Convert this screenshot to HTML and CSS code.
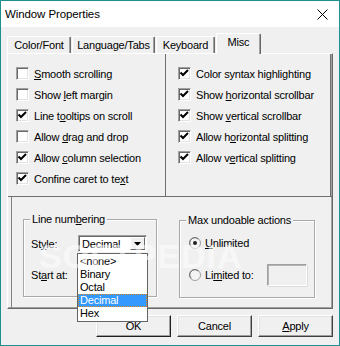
FILE: index.html
```html
<!DOCTYPE html>
<html>
<head>
<meta charset="utf-8">
<link rel="stylesheet" href="styles.css">
</head>
<body>
<div class="window">
  <div class="titlebar">
    <span class="title">Window Properties</span>
    <svg class="close" width="11" height="11" viewBox="0 0 11 11"><path d="M0.5 0.5 L10.5 10.5 M10.5 0.5 L0.5 10.5" stroke="#000" stroke-width="1" fill="none"/></svg>
  </div>
  <div class="content">
    <div class="tabs">
      <div class="tab tab-color">Color/Font</div>
      <div class="tab tab-lang">Language/Tabs</div>
      <div class="tab tab-key">Keyboard</div>
      <div class="tab tab-misc active">Misc</div>
    </div>
    <div class="panel">
      <div class="top">
        <div class="col col-left">
          <div class="check-row"><span class="cb"></span><span><u>S</u>mooth scrolling</span></div>
          <div class="check-row"><span class="cb"></span><span>Show <u>l</u>eft margin</span></div>
          <div class="check-row"><span class="cb checked"><svg width="11" height="11" viewBox="0 0 11 11"><path d="M1.5 4.5 L4 7 L9 2" stroke="#000" stroke-width="2" fill="none"/></svg></span><span>Line t<u>o</u>oltips on scroll</span></div>
          <div class="check-row"><span class="cb"></span><span>Allow <u>d</u>rag and drop</span></div>
          <div class="check-row"><span class="cb checked"><svg width="11" height="11" viewBox="0 0 11 11"><path d="M1.5 4.5 L4 7 L9 2" stroke="#000" stroke-width="2" fill="none"/></svg></span><span>Allow <u>c</u>olumn selection</span></div>
          <div class="check-row"><span class="cb checked"><svg width="11" height="11" viewBox="0 0 11 11"><path d="M1.5 4.5 L4 7 L9 2" stroke="#000" stroke-width="2" fill="none"/></svg></span><span>Confine caret to te<u>x</u>t</span></div>
        </div>
        <div class="col col-right">
          <div class="check-row"><span class="cb checked"><svg width="11" height="11" viewBox="0 0 11 11"><path d="M1.5 4.5 L4 7 L9 2" stroke="#000" stroke-width="2" fill="none"/></svg></span><span>Color syntax highlighting</span></div>
          <div class="check-row"><span class="cb checked"><svg width="11" height="11" viewBox="0 0 11 11"><path d="M1.5 4.5 L4 7 L9 2" stroke="#000" stroke-width="2" fill="none"/></svg></span><span>Show <u>h</u>orizontal scrollbar</span></div>
          <div class="check-row"><span class="cb checked"><svg width="11" height="11" viewBox="0 0 11 11"><path d="M1.5 4.5 L4 7 L9 2" stroke="#000" stroke-width="2" fill="none"/></svg></span><span>Show <u>v</u>ertical scrollbar</span></div>
          <div class="check-row"><span class="cb checked"><svg width="11" height="11" viewBox="0 0 11 11"><path d="M1.5 4.5 L4 7 L9 2" stroke="#000" stroke-width="2" fill="none"/></svg></span><span>Allow h<u>o</u>rizontal splitting</span></div>
          <div class="check-row"><span class="cb checked"><svg width="11" height="11" viewBox="0 0 11 11"><path d="M1.5 4.5 L4 7 L9 2" stroke="#000" stroke-width="2" fill="none"/></svg></span><span>Allow v<u>e</u>rtical splitting</span></div>
        </div>
      </div>
      <div class="bottom">
        <div class="group group-line">
          <span class="legend">Line num<u>b</u>ering</span>
          <div class="field-row">
            <span class="label">St<u>y</u>le:</span>
            <div class="combo">
              <span class="combo-text">Decimal</span>
              <span class="combo-btn"><svg width="7" height="4" viewBox="0 0 7 4"><path d="M0 0 H7 L3.5 4 Z" fill="#000"/></svg></span>
              <div class="dropdown">
                <div class="item">&lt;none&gt;</div>
                <div class="item">Binary</div>
                <div class="item">Octal</div>
                <div class="item selected">Decimal</div>
                <div class="item">Hex</div>
              </div>
            </div>
          </div>
          <div class="field-row row-start">
            <span class="label">St<u>a</u>rt at:</span>
          </div>
        </div>
        <div class="group group-undo">
          <span class="legend">Max undoable actions</span>
          <div class="radio-row">
            <svg class="radio" width="12" height="12" viewBox="0 0 12 12"><circle cx="6" cy="6" r="5.5" fill="#f4f4f4" stroke="#a0a0a0"/><path d="M2.2 9.3 A4.5 4.5 0 0 1 9.3 2.2" stroke="#696969" fill="none"/><circle cx="6" cy="6" r="2" fill="#222"/></svg>
            <span><u>U</u>nlimited</span>
          </div>
          <div class="radio-row row-limited">
            <svg class="radio" width="12" height="12" viewBox="0 0 12 12"><circle cx="6" cy="6" r="5.5" fill="#f4f4f4" stroke="#a0a0a0"/><path d="M2.2 9.3 A4.5 4.5 0 0 1 9.3 2.2" stroke="#696969" fill="none"/></svg>
            <span class="limited-label">Li<u>m</u>ited to:</span>
            <span class="num-input"></span>
          </div>
        </div>
      </div>
    </div>
    <div class="buttons">
      <div class="btn btn-default">OK</div>
      <div class="btn">Cancel</div>
      <div class="btn"><u>A</u>pply</div>
    </div>
  </div>
  <div class="watermark">SOFTPEDIA</div>
</div>
</body>
</html>
```
FILE: styles.css
```css
* { box-sizing: border-box; }
html, body { margin: 0; padding: 0; }
body {
  font-family: "Liberation Sans", Arial, sans-serif;
  font-size: 11px;
  letter-spacing: -0.2px;
  color: #000;
  background: #f0f0f0;
}
u { text-decoration: underline; text-underline-offset: 1px; }

.window {
  position: relative;
  width: 340px;
  height: 346px;
  border: 1px solid #1e8f90;
  background: #f0f0f0;
  overflow: hidden;
}

.titlebar {
  height: 26px;
  background: #fff;
  display: flex;
  align-items: center;
  justify-content: space-between;
  padding: 0 11px 0 4px;
}
.title {
  font-size: 11.5px;
  letter-spacing: -0.1px;
  color: #000;
}
.close { display: block; }

.content { display: flex; flex-direction: column; }

.tabs {
  display: flex;
  align-items: flex-end;
  gap: 1px;
  height: 20px;
  margin-top: 6px;
  padding-left: 6px;
}
.tab {
  height: 17px;
  display: flex;
  align-items: center;
  justify-content: center;
  border-top: 1px solid #fff;
  border-left: 1px solid #fff;
  border-right: 1px solid #696969;
  box-shadow: inset -1px 0 #a0a0a0;
  border-radius: 2px 2px 0 0;
  background: #f0f0f0;
  padding-bottom: 1px;
}
.tab-color { width: 64px; }
.tab-lang { width: 83px; }
.tab-key { width: 59px; }
.tab-misc { width: 45px; }
.tab.active {
  height: 21px;
  margin-bottom: -1px;
  position: relative;
  z-index: 2;
  padding-bottom: 4px;
}

.panel {
  width: 326px;
  margin-left: 6px;
  height: 256px;
  border-top: 1px solid #fff;
  border-left: 1px solid #fff;
  border-right: 1px solid #696969;
  border-bottom: 1px solid #696969;
  box-shadow: inset -1px -1px #a0a0a0;
  display: flex;
  flex-direction: column;
}

.top {
  display: flex;
  height: 143px;
  border-bottom: 1px solid #6f6f6f;
}
.col {
  display: flex;
  flex-direction: column;
  padding-top: 9px;
}
.col-left {
  width: 158px;
  padding-left: 8px;
  border-right: 1px solid #6f6f6f;
}
.col-right {
  flex: 1;
  padding-left: 12px;
  margin-right: 1px;
  border-right: 1px solid #6f6f6f;
}
.check-row {
  height: 21px;
  display: flex;
  align-items: center;
  gap: 5px;
  white-space: nowrap;
}
.cb {
  width: 13px;
  height: 13px;
  flex: none;
  background: #fff;
  border: 1px solid;
  border-color: #a0a0a0 #fff #fff #a0a0a0;
  box-shadow: inset 1px 1px #696969, inset -1px -1px #e3e3e3;
  display: flex;
  align-items: center;
  justify-content: center;
}
.cb svg { display: block; margin: 0 0 0 0; }

.bottom {
  flex: 1;
  display: flex;
  align-items: flex-start;
  margin-left: 3px;
  border-left: 1px solid #808080;
  padding: 22px 0 0 11px;
}
.group {
  position: relative;
  height: 78px;
  border: 1px solid #a9a9a9;
  box-shadow: 1px 1px 0 #fff, inset 1px 1px 0 #fff;
}
.group-line { width: 134px; padding: 15px 0 0 7px; }
.group-undo { width: 136px; margin: 1px 0 0 22px; padding: 14px 0 0 9px; }
.legend {
  position: absolute;
  top: -7px;
  left: 6px;
  padding: 0 2px;
  line-height: 13px;
  background: #f0f0f0;
  white-space: nowrap;
}

.field-row {
  display: flex;
  align-items: center;
  height: 17px;
}
.row-start { margin-top: 14px; }
.label { width: 47px; }
.combo {
  position: relative;
  width: 69px;
  height: 17px;
  background: #fff;
  border: 1px solid;
  border-color: #a0a0a0 #fff #fff #a0a0a0;
  box-shadow: inset 1px 1px #696969;
  display: flex;
  align-items: center;
}
.combo-text { flex: 1; padding-left: 3px; }
.combo-btn {
  width: 15px;
  height: 13px;
  margin-right: 1px;
  background: #f0f0f0;
  border: 1px solid;
  border-color: #fff #696969 #696969 #fff;
  display: flex;
  align-items: center;
  justify-content: center;
}
.combo-btn svg { display: block; }
.dropdown {
  position: absolute;
  top: 17px;
  left: -2px;
  width: 71px;
  background: #fff;
  border: 1px solid #646464;
  padding: 1px 0;
  z-index: 5;
}
.item {
  height: 13px;
  line-height: 13px;
  padding-left: 2px;
  white-space: nowrap;
}
.item.selected {
  background: #3399ff;
  color: #fff;
  outline: 1px dotted #e08a1e;
  outline-offset: -1px;
}

.radio-row {
  display: flex;
  align-items: center;
  height: 16px;
  gap: 4px;
}
.radio { display: block; flex: none; }
.row-limited { height: 22px; margin-top: 13px; }
.limited-label { width: 58px; }
.num-input {
  width: 40px;
  height: 22px;
  background: #f0f0f0;
  border: 1px solid;
  border-color: #a0a0a0 #fff #fff #a0a0a0;
  box-shadow: inset 1px 1px #b4b4b4, 1px 1px 0 #dcdcdc;
}

.buttons {
  display: flex;
  justify-content: flex-end;
  gap: 6px;
  margin-top: 6px;
  padding-right: 6px;
}
.btn {
  width: 75px;
  height: 22px;
  display: flex;
  align-items: center;
  justify-content: center;
  background: #f0f0f0;
  border: 1px solid;
  border-color: #fff #404040 #404040 #fff;
  box-shadow: inset -1px -1px #a0a0a0, inset 1px 1px #e3e3e3;
}
.btn-default {
  border-color: #fff #202020 #202020 #fff;
}

.watermark {
  position: absolute;
  left: 38px;
  top: 236px;
  font-size: 34px;
  font-weight: bold;
  letter-spacing: 1px;
  color: rgba(255, 255, 255, 0.55);
  pointer-events: none;
  z-index: 10;
}
```
